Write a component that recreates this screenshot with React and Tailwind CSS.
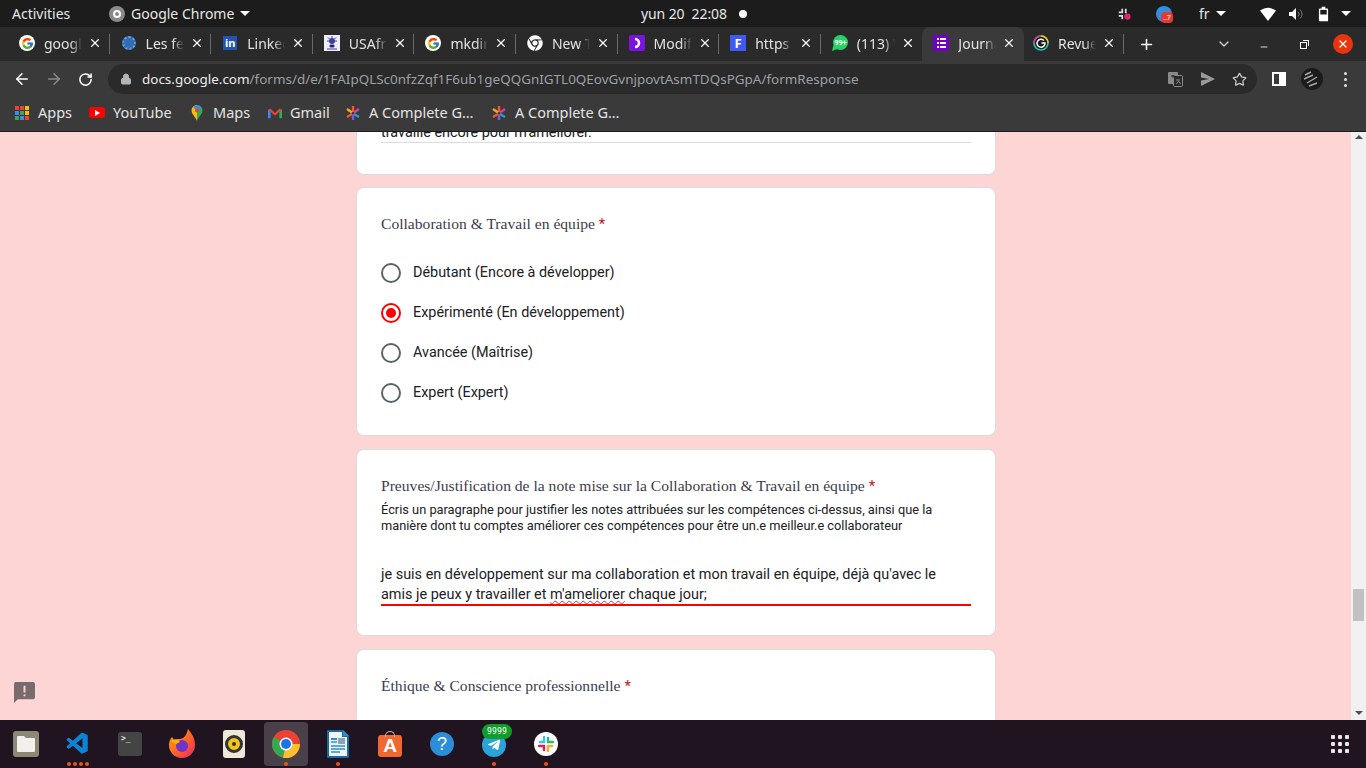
import React from 'react';
import { FcGoogle } from 'react-icons/fc';
import { FaChrome, FaTelegramPlane } from 'react-icons/fa';
import { VscVscode } from 'react-icons/vsc';
import { ArrowLeft, ArrowRight, RotateCw, Lock, Star, X, Plus, ChevronDown, Minus } from 'lucide-react';

const ubuntu = { fontFamily: '"Noto Sans", sans-serif' };

function GoogleIcon() {
  return (
    <span className="w-4 h-4 rounded-full bg-white flex items-center justify-center">
      <FcGoogle className="w-[13px] h-[13px]" />
    </span>
  );
}

function FormsIcon() {
  return (
    <span className="w-4 h-4 bg-[#7200c4] flex flex-col items-center justify-center gap-[2px]">
      {[0, 1, 2].map((i) => (
        <span key={i} className="flex gap-[1px]">
          <span className="w-[2px] h-[2px] bg-white" />
          <span className="w-[6px] h-[2px] bg-white" />
        </span>
      ))}
    </span>
  );
}

function RingIcon() {
  return (
    <svg viewBox="0 0 16 16" className="w-4 h-4">
      <circle cx="8" cy="8" r="7" fill="#1c1c1c" stroke="#25c4b4" strokeWidth="1.6" />
      <path d="M8 1a7 7 0 0 1 7 7" fill="none" stroke="#ffc400" strokeWidth="1.6" />
      <path d="M1 8a7 7 0 0 1 7-7" fill="none" stroke="#e0379a" strokeWidth="1.6" />
      <path d="M11 5.600A4 4 0 1 0 12 8H8.400" fill="none" stroke="#fff" strokeWidth="1.5" />
    </svg>
  );
}

function WhatsappIcon() {
  return (
    <svg viewBox="0 0 16 16" className="w-4 h-4">
      <circle cx="8.500" cy="7.500" r="7.500" fill="#25d366" />
      <path d="M0 16l1.500-6 4 4z" fill="#25d366" />
      <text x="8.500" y="10" textAnchor="middle" fontSize="7" fontWeight="700" fill="#fff" fontFamily="Roboto, sans-serif">99+</text>
    </svg>
  );
}

const tabs = [
  { title: 'google', icon: <GoogleIcon /> },
  { title: 'Les femmes', icon: <span className="w-[14px] h-[14px] rounded-full bg-[#2f6db5] border-2 border-dotted border-[#6f9ed6]" /> },
  { title: 'LinkedIn', icon: <span className="w-[14px] h-[14px] bg-[#2255b0] text-white text-[11px] leading-[14px] font-bold text-center">in</span> },
  { title: 'USAfrica', icon: (
    <svg viewBox="0 0 16 16" className="w-4 h-4"><rect width="16" height="16" fill="#eef" /><circle cx="8" cy="6" r="3" fill="#3c3f9e" /><path d="M8 1v2M3 6h2M11 6h2M4 2.500l1.500 1.500M12 2.500L10.500 4M6 10h4v2H6zM3 14h10" stroke="#3c3f9e" /></svg>
  ) },
  { title: 'mkdir', icon: <GoogleIcon /> },
  { title: 'New Tab', icon: <FaChrome className="w-4 h-4 text-white" /> },
  { title: 'Modifier', icon: (
    <svg viewBox="0 0 16 16" className="w-4 h-4"><rect width="16" height="16" rx="2" fill="#7a12e0" /><path d="M6 4a4 4 0 0 1 0 8" fill="none" stroke="#fff" strokeWidth="2.600" /></svg>
  ) },
  { title: 'https', icon: <span className="w-4 h-4 bg-[#3d5af1] text-white text-[13px] leading-4 font-bold text-center">F</span> },
  { title: '(113) WhatsApp', icon: <WhatsappIcon /> },
  { title: 'Journal', icon: <FormsIcon />, active: true },
  { title: 'Revue', icon: <RingIcon />, tight: true },
];

function Tab({ tab, last }) {
  return (
    <div className={`relative w-[101.6px] h-[34px] pb-[2px] shrink-0 flex items-center pl-[11px] ${tab.active ? 'bg-[#3a3a3a] rounded-t-lg' : ''} ${tab.tight ? '-ml-[2px]' : ''}`}>
      <span className="w-4 h-4 flex items-center justify-center shrink-0">{tab.icon}</span>
      <span className="ml-[9px] w-[38px] overflow-hidden whitespace-nowrap text-[14px] text-[#e3e3e3] [mask-image:linear-gradient(to_right,black_70%,transparent)]">{tab.title}</span>
      <X className="ml-[6px] w-[14px] h-[14px] text-white shrink-0" strokeWidth={2} />
      {!tab.active && !last && <span className="absolute right-0 top-[7px] w-px h-5 bg-[#6a6a6a]" />}
    </div>
  );
}

function Asterisk() {
  return (
    <svg viewBox="0 0 16 16" className="w-4 h-4">
      <path d="M8 1v6" stroke="#f05a28" strokeWidth="2.400" />
      <path d="M2 4l5 3.500" stroke="#f5a623" strokeWidth="2.400" />
      <path d="M14 4L9 7.500" stroke="#e0399b" strokeWidth="2.400" />
      <path d="M2 12l5-3" stroke="#f05a28" strokeWidth="2.400" />
      <path d="M14 12L9 9" stroke="#1aa3c8" strokeWidth="2.400" />
      <path d="M8 15V9.500" stroke="#7a5cd6" strokeWidth="2.400" />
    </svg>
  );
}

function TopBar() {
  return (
    <div className="h-[27px] bg-[#1c1c1c] flex items-center text-[14px] text-[#e6e6e6] shrink-0" style={ubuntu}>
      <span className="ml-3 w-[97px]">Activities</span>
      <span className="w-4 h-4 rounded-full bg-[#8a8a8a] flex items-center justify-center"><span className="w-2 h-2 rounded-full border-2 border-white" /></span>
      <span className="ml-[6px] w-[109px] whitespace-nowrap">Google Chrome</span>
      <span className="w-0 h-0 border-x-[5px] border-x-transparent border-t-[5px] border-t-white" />
      <span className="ml-[391px] w-[86px] whitespace-nowrap tracking-[-0.1px]">yun 20&nbsp; 22:08</span>
      <span className="ml-[12px] w-[8px] h-[8px] rounded-full bg-white" />
      <svg viewBox="0 0 16 16" className="ml-[370px] w-[14px] h-[14px]">
        <path d="M6 2v5M2 6h5M10 2v5M2 10h5M6 9v5M10 9v3" stroke="#ddd" strokeWidth="2" />
        <circle cx="12" cy="11" r="3.500" fill="#e8246f" />
      </svg>
      <span className="relative ml-[25px] w-4 h-4 rounded-full bg-[#2f8fe0]"><span className="absolute left-[5px] top-[6px] w-[12px] h-[11px] bg-[#e8392f] rounded-sm text-[7px] leading-[11px] text-white text-center">..7</span></span>
      <span className="ml-[27px] w-[14px]">fr</span>
      <span className="ml-[3px] w-0 h-0 border-x-[5px] border-x-transparent border-t-[5px] border-t-white" />
      <svg viewBox="0 0 16 14" className="ml-[34px] w-4 h-[14px]"><path d="M0 3.500Q8-2 16 3.500L8 14z" fill="#fff" /></svg>
      <svg viewBox="0 0 16 14" className="ml-[12px] w-4 h-[14px]"><path d="M1 5h3l4-4v12l-4-4H1z" fill="#fff" /><path d="M10 4.500a3.500 3.500 0 0 1 0 5M12 2.500a6 6 0 0 1 0 9" stroke="#777" fill="none" /></svg>
      <svg viewBox="0 0 12 16" className="ml-[14px] w-[11px] h-4"><path d="M4 0h4v2h2a1 1 0 0 1 1 1v12a1 1 0 0 1-1 1H2a1 1 0 0 1-1-1V3a1 1 0 0 1 1-1h2z" fill="#fff" /><rect x="2.500" y="3.500" width="7" height="5" fill="#1c1c1c" /></svg>
      <span className="ml-[12px] w-0 h-0 border-x-[5px] border-x-transparent border-t-[5px] border-t-white" />
    </div>
  );
}

function TabStrip() {
  return (
    <div className="h-[34px] bg-[#2a2a2a] flex items-center pl-[8px] shrink-0" style={ubuntu}>
      {tabs.map((tab, i) => <Tab key={i} tab={tab} last={tabs[i + 1]?.active} />)}
      <Plus className="ml-[14px] w-[17px] h-[17px] text-white" strokeWidth={2.2} />
      <ChevronDown className="ml-[61px] w-[16px] h-[16px] text-[#d0d0d0]" />
      <Minus className="ml-[27px] w-[10px] h-[10px] text-white mt-[5px]" />
      <span className="relative ml-[31px] w-[7px] h-[7px] border border-white mt-[2px]">
        <span className="absolute -top-[3px] -right-[3px] w-[6px] h-[6px] border-t border-r border-white" />
      </span>
      <span className="ml-[26px] w-[20px] h-[20px] rounded-full bg-[#e8350c] flex items-center justify-center"><X className="w-3 h-3 text-white" strokeWidth={2.4} /></span>
    </div>
  );
}

function Toolbar() {
  return (
    <div className="h-[36px] bg-[#3a3a3a] flex items-center shrink-0" style={ubuntu}>
      <ArrowLeft className="ml-[13px] w-[18px] h-[18px] text-white" strokeWidth={2} />
      <ArrowRight className="ml-[14px] w-[18px] h-[18px] text-[#8a8a8a]" strokeWidth={2} />
      <RotateCw className="ml-[15px] w-[15px] h-[15px] text-white" strokeWidth={2.4} />
      <div className="ml-[15px] w-[1149px] h-[30px] rounded-full bg-[#2a2a2a] flex items-center">
        <Lock className="ml-[12px] w-3 h-3 text-[#b5b5b5]" fill="#b5b5b5" />
        <div className="ml-[10px] w-[1026px] pt-[1px] text-[13.46px] whitespace-nowrap text-[#9aa0a6]">
          <span className="text-[#e8eaed]">docs.google.com</span>/forms/d/e/1FAIpQLSc0nfzZqf1F6ub1geQQGnIGTL0QEovGvnjpovtAsmTDQsPGpA/formResponse
        </div>
        <svg viewBox="0 0 15 15" className="w-[15px] h-[15px]">
          <rect x="0" y="0" width="10" height="12" rx="1" fill="#8a8a8a" />
          <rect x="5.500" y="3.500" width="9" height="11" rx="1" fill="#2a2a2a" stroke="#8a8a8a" />
          <path d="M3 4h4M5 3v3" stroke="#2a2a2a" strokeWidth="1" />
          <path d="M8 8h4M8.500 12l2-3 2 3" stroke="#8a8a8a" strokeWidth="1" fill="none" />
        </svg>
        <svg viewBox="0 0 16 14" className="ml-[17px] w-4 h-[14px]"><path d="M1 0l14 7L1 14l0-5.500L9 7 1 5.500z" fill="#9a9a9a" /></svg>
        <Star className="ml-[16px] w-[15px] h-[15px] text-[#c8c8c8]" strokeWidth={2} />
      </div>
      <span className="ml-[15px] w-[14px] h-[14px] border-2 border-white flex justify-end"><span className="w-[5px] bg-white" /></span>
      <svg viewBox="0 0 22 22" className="ml-[15px] w-[22px] h-[22px]">
        <circle cx="11" cy="11" r="11" fill="#1b1b1b" />
        <path d="M4 7l6-3M3 11l9-4M6 15l10-6M8 18l8-3" stroke="#a8a8a8" strokeWidth="1.400" />
      </svg>
      <span className="ml-[21px] flex flex-col gap-[3px]">
        <span className="w-[3px] h-[3px] rounded-full bg-[#e0e0e0]" />
        <span className="w-[3px] h-[3px] rounded-full bg-[#e0e0e0]" />
        <span className="w-[3px] h-[3px] rounded-full bg-[#e0e0e0]" />
      </span>
    </div>
  );
}

function Bookmarks() {
  const colors = ['#ea4335', '#ea4335', '#fbbc04', '#4285f4', '#34a853', '#fbbc04', '#34a853', '#4285f4', '#ea4335'];
  return (
    <div className="h-[35px] pb-[3px] bg-[#3a3a3a] border-b border-[#1c1c1c] flex items-center text-[14.5px] text-[#e3e3e3] shrink-0" style={ubuntu}>
      <span className="ml-[15px] w-[14px] h-[14px] grid grid-cols-3 gap-px">
        {colors.map((c, i) => <span key={i} style={{ backgroundColor: c }} />)}
      </span>
      <span className="ml-[9px] w-[44px]">Apps</span>
      <span className="ml-[7px] w-4 h-[11px] rounded-[3px] bg-[#f00] flex items-center justify-center"><span className="border-y-[3px] border-l-[5px] border-y-transparent border-l-white" /></span>
      <span className="ml-[8px] w-[78px]">YouTube</span>
      <svg viewBox="0 0 12 16" className="w-3 h-4"><path d="M6 0a5.500 5.500 0 0 0-5.500 5.500C.5 9 4 11 6 16z" fill="#fbbc04" /><path d="M6 0a5.500 5.500 0 0 1 5.500 5.500C11.500 9 8 11 6 16z" fill="#34a853" /><path d="M2 2a5.500 5.500 0 0 1 8 0L6 6z" fill="#4285f4" /><circle cx="6" cy="5.500" r="2" fill="#ea4335" /></svg>
      <span className="ml-[10px] w-[55px]">Maps</span>
      <svg viewBox="0 0 16 12" className="w-[14px] h-[12px]"><path d="M0 12V2l3 2v8z" fill="#4285f4" /><path d="M16 12V2l-3 2v8z" fill="#34a853" /><path d="M0 2l3-1 5 5 5-5 3 1-8 7z" fill="#ea4335" /></svg>
      <span className="ml-[8px] w-[55px]">Gmail</span>
      <Asterisk />
      <span className="ml-[8px] w-[114px] whitespace-nowrap">A Complete G…</span>
      <span className="ml-[8px]"><Asterisk /></span>
      <span className="ml-[8px] whitespace-nowrap">A Complete G…</span>
    </div>
  );
}

function Heading({ children }) {
  return (
    <div className="h-6 leading-6 text-[15.6px] text-[#3c3c4a] whitespace-nowrap font-['Liberation_Serif',serif]">
      {children} <span className="text-[#c8102e] text-[15px] leading-none font-['Roboto',sans-serif]">*</span>
    </div>
  );
}

function Radio({ label, checked }) {
  return (
    <div className="h-10 flex items-center">
      <span className={`w-5 h-5 rounded-full border-2 flex items-center justify-center ${checked ? 'border-[#f00]' : 'border-[#5f6368]'}`}>
        {checked && <span className="w-[10px] h-[10px] rounded-full bg-[#f00]" />}
      </span>
      <span className="ml-3 text-[14.4px] text-[#202124]">{label}</span>
    </div>
  );
}

function FormContent() {
  return (
    <div className="flex-1 relative overflow-hidden font-['Roboto',sans-serif]">
      <div className="w-[640px] ml-[356px] flex flex-col gap-[13px]">
        <div className="h-[43px] -mb-px bg-white border-x border-b border-[#dadce0] rounded-b-lg px-6">
          <div className="h-[10px] overflow-hidden flex items-end text-[14.4px] leading-5 text-[#202124]">
            <span className="whitespace-nowrap mb-[-1px]">travaille encore pour m'améliorer.</span>
          </div>
          <div className="h-px bg-[#dadce0]" />
        </div>

        <div className="bg-white border border-[#dadce0] rounded-lg px-6 pt-6 pb-[22px]">
          <Heading>Collaboration &amp; Travail en équipe</Heading>
          <div className="mt-[17px]">
            <Radio label="Débutant (Encore à développer)" />
            <Radio label="Expérimenté (En développement)" checked />
            <Radio label="Avancée (Maîtrise)" />
            <Radio label="Expert (Expert)" />
          </div>
        </div>

        <div className="bg-white border border-[#dadce0] rounded-lg px-6 pt-6 pb-[29px]">
          <Heading>Preuves/Justification de la note mise sur la Collaboration &amp; Travail en équipe</Heading>
          <p className="mt-[4px] text-[12.8px] leading-4 text-[#202124]">
            Écris un paragraphe pour justifier les notes attribuées sur les compétences ci-dessus, ainsi que la manière dont tu comptes améliorer ces compétences pour être un.e meilleur.e collaborateur
          </p>
          <div className="mt-[31px] h-[41px] border-b-2 border-[#f00] text-[14.45px] leading-5 text-[#202124]">
            je suis en développement sur ma collaboration et mon travail en équipe, déjà qu'avec le<br />
            amis je peux y travailler et <span className="underline decoration-wavy decoration-[#d93025] decoration-1">m'ameliorer</span> chaque jour;
          </div>
        </div>

        <div className="h-[120px] bg-white border border-[#dadce0] rounded-lg px-6 pt-6">
          <Heading>Éthique &amp; Conscience professionnelle</Heading>
        </div>
      </div>

      <svg viewBox="0 0 22 22" className="absolute left-[14px] top-[550px] w-[21px] h-[21px]">
        <path d="M2 0h18a2 2 0 0 1 2 2v14a2 2 0 0 1-2 2H4l-4 4V2a2 2 0 0 1 2-2z" fill="#786b6b" />
        <path d="M10 4h2v7h-2zM10 13h2v2h-2z" fill="#fed5d5" />
      </svg>
    </div>
  );
}

function Scrollbar() {
  return (
    <div className="w-[15px] bg-[#f1f1f1] flex flex-col items-center shrink-0">
      <span className="mt-[3px] w-0 h-0 border-x-[4px] border-x-transparent border-b-[4px] border-b-[#505050]" />
      <span className="mt-[450px] w-[11px] h-[32px] bg-[#c1c1c1]" />
      <span className="mt-[90px] w-0 h-0 border-x-[4px] border-x-transparent border-t-[4px] border-t-[#505050]" />
    </div>
  );
}

function DockItem({ children, dots = 0, active }) {
  return (
    <div className={`relative w-[44px] h-[44px] rounded-sm flex items-center justify-center ${active ? 'bg-[#4a404a]' : ''}`}>
      {children}
      {dots > 0 && (
        <span className="absolute bottom-0 left-0 right-0 flex justify-center gap-[2px]">
          {Array.from({ length: dots }).map((_, i) => <span key={i} className="w-1 h-1 rounded-full bg-[#e95420]" />)}
        </span>
      )}
    </div>
  );
}

function Dock() {
  return (
    <div className="h-[48px] bg-[#1f141f] flex items-center pl-[4px] gap-[8px] shrink-0 relative">
      <DockItem>
        <span className="w-[26px] h-[26px] rounded-[3px] bg-[#8d8775] flex items-center justify-center">
          <svg viewBox="0 0 18 16" className="w-[18px] h-4"><path d="M1 0h6l2 2h8a1 1 0 0 1 1 1v12a1 1 0 0 1-1 1H1a1 1 0 0 1-1-1V1a1 1 0 0 1 1-1z" fill="#f2f0ec" /></svg>
        </span>
      </DockItem>
      <DockItem dots={4}><VscVscode className="w-[26px] h-[26px] text-[#0a84d6]" /></DockItem>
      <DockItem>
        <span className="w-6 h-6 rounded-[3px] bg-[#444] text-white text-[8px] leading-3 pl-[3px] pt-[1px] font-['DejaVu_Sans_Mono',monospace]">&gt;_</span>
      </DockItem>
      <DockItem>
        <svg viewBox="0 0 26 30" className="w-[26px] h-[30px]">
          <defs>
            <linearGradient id="ff" x1="0" y1="0" x2="1" y2="1"><stop offset="0" stopColor="#ffb000" /><stop offset=".6" stopColor="#ff5a2c" /><stop offset="1" stopColor="#e5246c" /></linearGradient>
          </defs>
          <path d="M19 0c4 5 7 9 7 16a13 13 0 0 1-26 0c0-3 1-6 3-8l2 3c2-1 3-1 5-1 4 0 7-2 9-10z" fill="url(#ff)" />
          <circle cx="13" cy="17" r="6" fill="#6f35c9" />
          <path d="M2 12c3-2 7-2 9 1l-4 2z" fill="#ffb000" />
        </svg>
      </DockItem>
      <DockItem>
        <span className="w-[22px] h-7 rounded-[3px] bg-[#eee8d8] flex items-center justify-center"><span className="w-[18px] h-[18px] rounded-full bg-[#f0c419] border-[3px] border-[#333] flex items-center justify-center"><span className="w-1 h-1 rounded-full bg-[#333]" /></span></span>
      </DockItem>
      <DockItem dots={1} active>
        <svg viewBox="0 0 28 28" className="w-7 h-7">
          <circle cx="14" cy="14" r="14" fill="#ea4335" />
          <path d="M14 14L2 7a14 14 0 0 0 9 20.700z" fill="#34a853" />
          <path d="M14 14h14a14 14 0 0 1-17 13.700z" fill="#fbc02d" />
          <circle cx="14" cy="14" r="6.500" fill="#fff" />
          <circle cx="14" cy="14" r="5" fill="#1a73e8" />
        </svg>
      </DockItem>
      <DockItem dots={1}>
        <svg viewBox="0 0 22 28" className="w-[22px] h-7">
          <path d="M1 0h15l6 6v21a1 1 0 0 1-1 1H1a1 1 0 0 1-1-1V1a1 1 0 0 1 1-1z" fill="#176b9e" />
          <path d="M2 2h13v5h5v19H2z" fill="#eef4f8" />
          <path d="M16 0l6 6h-6z" fill="#2c8fce" />
          <rect x="4" y="8" width="6" height="2" fill="#2c8fce" />
          <rect x="11" y="8" width="7" height="6" fill="#8aa4b8" />
          <path d="M4 12h6M4 16h14M4 19h14M4 22h9" stroke="#2c8fce" strokeWidth="1.500" />
        </svg>
      </DockItem>
      <DockItem>
        <span className="relative w-6 h-[22px] mt-[3px] rounded-[3px] bg-[#f0682f] text-white text-[19px] leading-[22px] font-bold text-center font-['Liberation_Sans',sans-serif]">
          A
          <span className="absolute -top-[4px] left-[7px] w-[10px] h-[6px] rounded-t-full border border-b-0 border-[#c9b7a8]" />
        </span>
      </DockItem>
      <DockItem>
        <span className="w-6 h-6 rounded-full bg-[#2b8fd8] text-white text-[18px] leading-6 text-center font-['Liberation_Sans',sans-serif]">?</span>
      </DockItem>
      <DockItem dots={1}>
        <span className="w-6 h-6 rounded-full bg-[#2aa3dd] flex items-center justify-center mt-[2px]"><FaTelegramPlane className="w-[14px] h-[14px] text-white" /></span>
        <span className="absolute top-[2px] left-[10px] h-[15px] w-[30px] rounded-full bg-[#0f9d2c] text-[8px] leading-[15px] text-center text-white tracking-wide font-['DejaVu_Sans_Mono',monospace]">9999</span>
      </DockItem>
      <DockItem dots={1}>
        <span className="w-6 h-6 rounded-full bg-white flex items-center justify-center">
          <svg viewBox="0 0 16 16" className="w-4 h-4">
            <path d="M6 1v5H2" stroke="#36c5f0" strokeWidth="2.400" fill="none" strokeLinecap="round" />
            <path d="M15 6h-5V2" stroke="#2eb67d" strokeWidth="2.400" fill="none" strokeLinecap="round" />
            <path d="M10 15v-5h4" stroke="#ecb22e" strokeWidth="2.400" fill="none" strokeLinecap="round" />
            <path d="M1 10h5v4" stroke="#e01e5a" strokeWidth="2.400" fill="none" strokeLinecap="round" />
          </svg>
        </span>
      </DockItem>
      <div className="absolute right-[17px] top-[15px] grid grid-cols-3 gap-[3px]">
        {Array.from({ length: 9 }).map((_, i) => <span key={i} className="w-1 h-1 rounded-[1px] bg-[#e8e8e8]" />)}
      </div>
    </div>
  );
}

export default function App() {
  return (
    <div className="w-[1366px] h-[768px] flex flex-col overflow-hidden bg-[#fed5d5]">
      <TopBar />
      <TabStrip />
      <Toolbar />
      <Bookmarks />
      <div className="flex-1 flex min-h-0">
        <FormContent />
        <Scrollbar />
      </div>
      <Dock />
    </div>
  );
}
